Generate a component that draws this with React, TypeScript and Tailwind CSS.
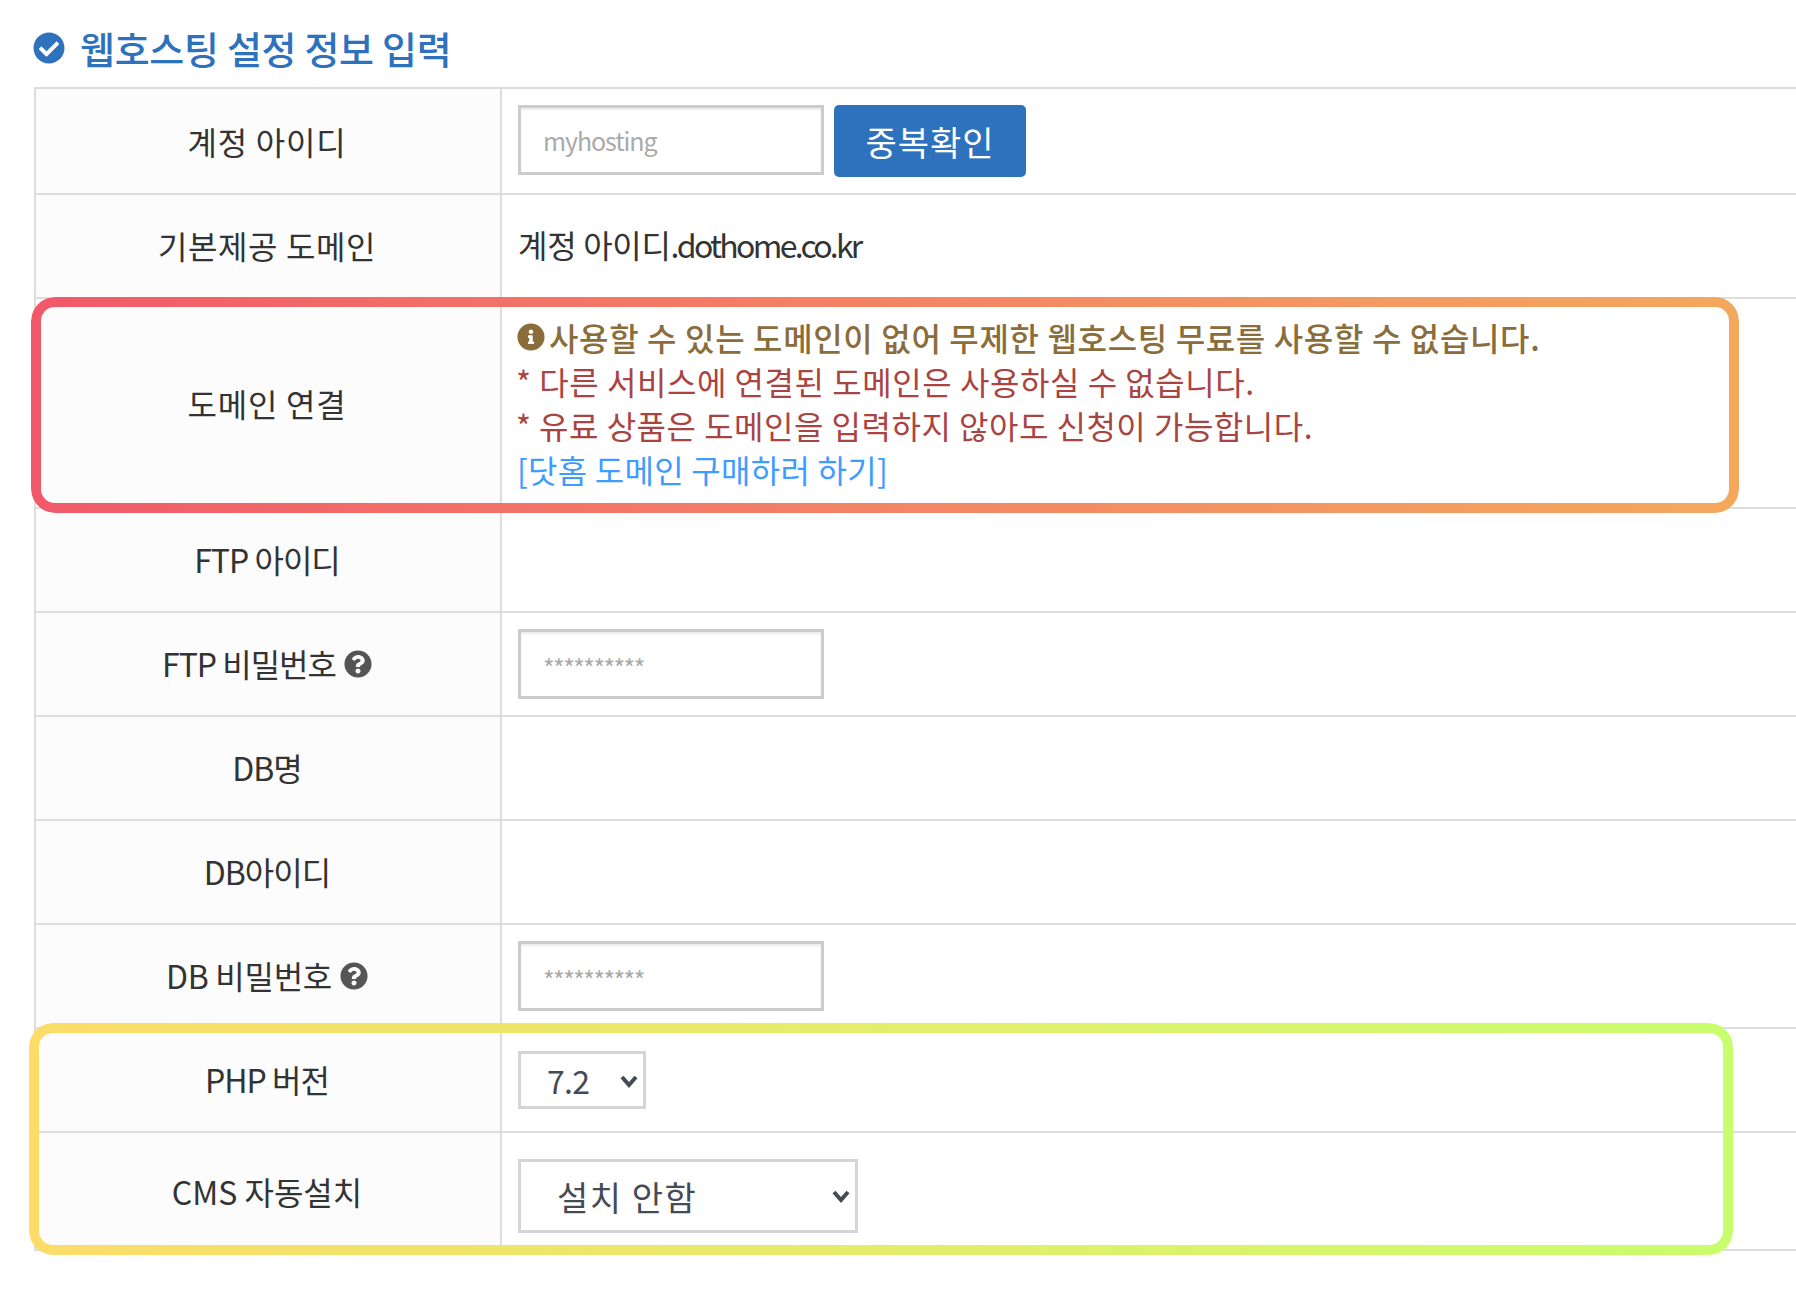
import type { ReactNode } from "react";
import { FaCheckCircle, FaInfoCircle, FaQuestionCircle } from "react-icons/fa";

const font = "font-['Noto_Sans_CJK_KR','Noto_Sans',sans-serif]";

function Chevron({ className }: { className: string }) {
  return (
    <svg viewBox="0 0 18 14" className={className} fill="none" stroke="#444b55" strokeWidth="4">
      <path d="M2 3l7 8 7-8" />
    </svg>
  );
}

function Row({
  label,
  hint,
  height = "h-[104px]",
  lift = "pb-[3px]",
  tracking = "tracking-[-1px]",
  children,
}: {
  label: string;
  hint?: boolean;
  height?: string;
  lift?: string;
  tracking?: string;
  children?: ReactNode;
}) {
  return (
    <div className={`flex border-t-2 border-[#ddd] ${height}`}>
      <div
        className={`flex w-[466px] shrink-0 items-center justify-center gap-[8px] border-r-2 border-[#ddd] bg-[#fcfcfc] pr-[2px] text-[32px] text-[#333] ${tracking} ${lift}`}
      >
        <span>{label}</span>
        {hint && <FaQuestionCircle className="mt-[2px] text-[28px] text-[#555]" />}
      </div>
      <div className="flex flex-1 items-center pl-[16px]">{children}</div>
    </div>
  );
}

function TextBox({ placeholder, className = "" }: { placeholder: string; className?: string }) {
  return (
    <input
      placeholder={placeholder}
      className={`h-[70px] w-[306px] border-[3px] border-[#ccc] px-[22px] text-[25px] shadow-[inset_0_2px_2px_rgba(0,0,0,0.08)] placeholder:text-[#aaa] ${className}`}
    />
  );
}

function Highlight({ className }: { className: string }) {
  return (
    <div
      className={`pointer-events-none absolute rounded-[24px] p-[10px] [mask:linear-gradient(#000_0_0)_content-box_exclude,linear-gradient(#000_0_0)] ${className}`}
    />
  );
}

export default function App() {
  return (
    <div className={`relative h-[1292px] overflow-hidden bg-white ${font}`}>
      <div className="flex h-[87px] items-center gap-[15px] pl-[33px] pt-[8px]">
        <FaCheckCircle className="text-[32px] text-[#2e72bd]" />
        <h2 className="text-[38px] font-medium tracking-[-0.3px] text-[#2e72bd]">웹호스팅 설정 정보 입력</h2>
      </div>

      <div className="ml-[34px] border-b-2 border-l-2 border-[#ddd]">
        <Row label="계정 아이디" height="h-[106px]" lift="" tracking="tracking-[0.8px]">
          <TextBox placeholder="myhosting" className="mb-[2px] tracking-[-1.1px]" />
          <button className="ml-[10px] h-[72px] w-[192px] rounded-[5px] bg-[#2e72bd] text-[34px] tracking-[1px] text-white">
            중복확인
          </button>
        </Row>
        <Row label="기본제공 도메인" tracking="tracking-[0.6px]">
          <span className="mb-[4px] text-[32px] text-[#333]">
            <span className="tracking-[-0.3px]">계정 아이디</span>
            <span className="tracking-[-2.7px]">.dothome.co.kr</span>
          </span>
        </Row>
        <Row label="도메인 연결" height="h-[210px]" lift="" tracking="tracking-[0.8px]">
          <div className="text-[32px] leading-[44px] text-[#a94442]">
            <div className="-ml-[1px] flex items-center gap-[4px] font-medium tracking-[0.65px] text-[#8a6d3b]">
              <FaInfoCircle className="text-[28px]" />
              <span>사용할 수 있는 도메인이 없어 무제한 웹호스팅 무료를 사용할 수 없습니다.</span>
            </div>
            <div className="-ml-[2px] tracking-[0.55px]">* 다른 서비스에 연결된 도메인은 사용하실 수 없습니다.</div>
            <div className="-ml-[2px] tracking-[0.5px]">* 유료 상품은 도메인을 입력하지 않아도 신청이 가능합니다.</div>
            <a className="-ml-[1px] tracking-[0.25px] text-[#3f9cff]">[닷홈 도메인 구매하러 하기]</a>
          </div>
        </Row>
        <Row label="FTP 아이디" />
        <Row label="FTP 비밀번호" hint>
          <TextBox placeholder="**********" className="pt-[5px] tracking-[-1.6px]" />
        </Row>
        <Row label="DB명" />
        <Row label="DB아이디" />
        <Row label="DB 비밀번호" hint tracking="tracking-[-0.3px]">
          <TextBox placeholder="**********" className="pt-[5px] tracking-[-1.6px]" />
        </Row>
        <Row label="PHP 버전" lift="pb-[2px]">
          <div className="relative">
            <select className="h-[58px] w-[128px] appearance-none border-[3px] border-[#d5d5d9] bg-white pl-[26px] text-[32px] tracking-[-0.7px] text-[#444b55]">
              <option>7.2</option>
            </select>
            <Chevron className="absolute right-[8px] top-[23px] w-[18px]" />
          </div>
        </Row>
        <Row label="CMS 자동설치" height="h-[118px]" lift="" tracking="tracking-[0px]">
          <div className="relative mt-[10px]">
            <select className="h-[74px] w-[340px] appearance-none border-[3px] border-[#d5d5d9] bg-white pl-[36px] text-[34px] tracking-[1.5px] text-[#444b55]">
              <option>설치 안함</option>
            </select>
            <Chevron className="absolute right-[8px] top-[30px] w-[18px]" />
          </div>
        </Row>
      </div>

      <Highlight className="left-[31px] top-[297px] h-[216px] w-[1708px] bg-gradient-to-r from-[#f0596a] to-[#f4a85c]" />
      <Highlight className="left-[29px] top-[1023px] h-[232px] w-[1704px] bg-gradient-to-r from-[#fbdc68] to-[#c8fd6c]" />
    </div>
  );
}
